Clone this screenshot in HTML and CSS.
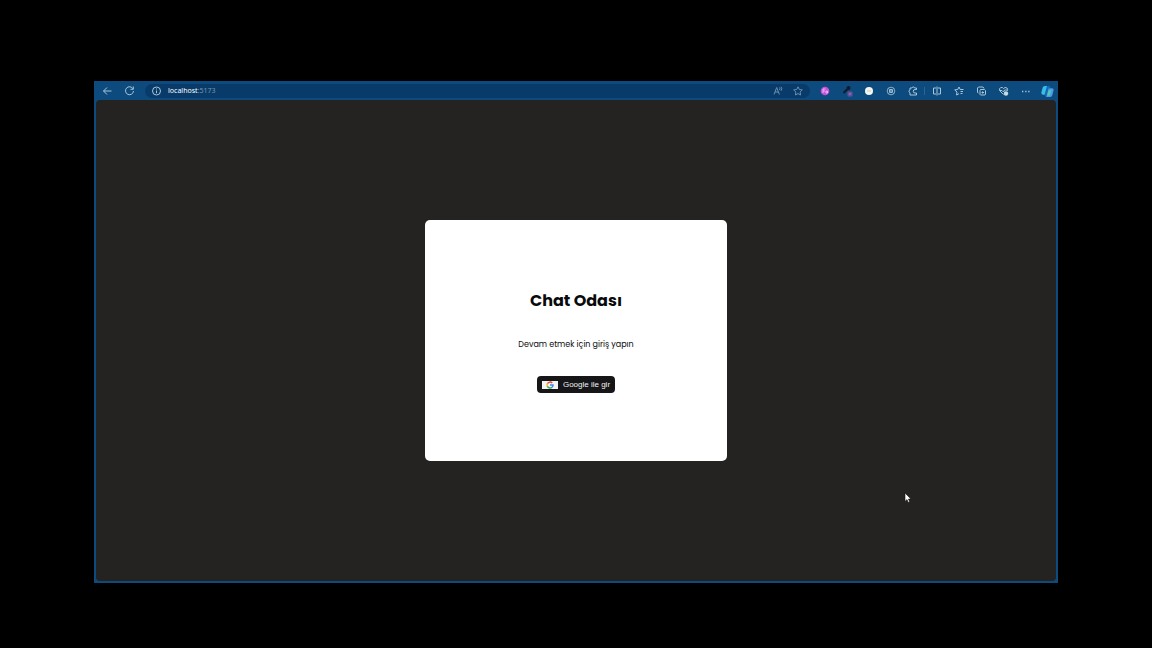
FILE: index.html
```html
<!DOCTYPE html>
<html lang="tr">
<head>
<meta charset="utf-8">
<meta name="viewport" content="width=device-width, initial-scale=1">
<title>Chat Odası</title>
<link rel="stylesheet" href="styles.css">
</head>
<body>
<div class="browser">
  <header class="toolbar">
    <button class="tool" aria-label="Geri"><svg class="icon" viewBox="0 0 12 12"><path d="M10.500 6H2.500M6 2.500 2.500 6 6 9.500"/></svg></button>
    <button class="tool" aria-label="Yenile"><svg class="icon" viewBox="0 0 12 12"><path d="M10 3.800A4 4 0 1 0 10.500 6M10.300 1.500v2.800H7.500"/></svg></button>
    <div class="address">
      <button class="tool" aria-label="Site bilgisi"><svg class="icon" viewBox="0 0 12 12"><circle cx="6.500" cy="6" r="4"/><path d="M6.500 5.500v2.700M6.500 3.500v1"/></svg></button>
      <div class="url" role="textbox" contenteditable="true" spellcheck="false" aria-label="Adres"><span class="host">localhost</span><span class="port">:5173</span></div>
      <button class="tool tool-dim" aria-label="Sesli oku"><svg class="icon" viewBox="0 0 12 12"><path d="M2 9.500 4.700 2.500 7.400 9.500M3 7h3.500M7.500 2.500q1 1 0 2.500M9 1.800q1.600 1.700 0 4"/></svg></button>
      <button class="tool tool-dim" aria-label="Sık kullanılanlara ekle"><svg class="icon" viewBox="0 0 12 12"><path d="m6 1.800 1.300 2.700 3 .4-2.200 2.100.5 3L6 8.600 3.400 10l.5-3-2.200-2.100 3-.4z"/></svg></button>
    </div>
    <button class="tool" aria-label="Uzantı"><svg class="icon" viewBox="0 0 12 12"><circle cx="6" cy="6" r="4.300" fill="#c850d8" stroke="none"/><path d="M4 8V4h2.500M4 6h2M7 8V6h1.500v2z" stroke="#f7d9fb" stroke-width=".7"/></svg></button>
    <button class="tool" aria-label="Renk seçici"><svg class="icon" viewBox="0 0 12 12"><path d="m2.500 8 4-4" stroke="#101b2c" stroke-width="2"/><circle cx="7.500" cy="3" r="2" fill="#101b2c" stroke="none"/><rect x="6.500" y="6.500" width="5" height="5" rx="1" fill="#65519b" stroke="none"/><path d="M8 9h2" stroke="#b57bae"/></svg></button>
    <button class="tool" aria-label="Uzantı 2"><svg class="icon" viewBox="0 0 12 12"><circle cx="6" cy="6" r="4" fill="#f5f5ef" stroke="none"/><path d="M5 5v2M7 5v2" stroke="#c5cbc9"/></svg></button>
    <button class="tool" aria-label="Uzantı 3"><svg class="icon" viewBox="0 0 12 12"><circle cx="6" cy="6" r="3.800" stroke-width=".8"/><circle cx="6" cy="6" r="1.600"/><path d="m3.500 3.500 5 5M8.500 3.500l-5 5" stroke-width=".5"/></svg></button>
    <button class="tool" aria-label="Uzantılar"><svg class="icon" viewBox="0 0 12 12"><path d="M9.500 4.500V3H7.600a1.400 1.400 0 0 0-2.700 0H3v2a1.400 1.400 0 0 0 0 2.700V10h6.500V8H8a1.500 1.500 0 0 1 0-3.500z"/></svg></button>
    <span class="divider"></span>
    <button class="tool" aria-label="Ekranı böl"><svg class="icon" viewBox="0 0 12 12"><path d="M5 3H2.500v6H5M7 3h2.500v6H7M6 1.500v9"/></svg></button>
    <button class="tool" aria-label="Sık kullanılanlar"><svg class="icon" viewBox="0 0 12 12"><path d="M7.200 4.500 6 2 4.700 4.500l-3 .4L4 7l-.5 3L6 8.700M7.200 4.500H10.500M7.500 6.500H10M7.500 8.500H9.500"/></svg></button>
    <button class="tool" aria-label="Koleksiyonlar"><svg class="icon" viewBox="0 0 12 12"><path d="M3.500 8 2.500 7.500V3l1-1H8l1 1.500M5 5.500V5l.5-.5h4l1 1v4l-.5.500H5.500L5 9.500zM6.500 7.500h2.500M7.700 6.300v2.400"/></svg></button>
    <button class="tool" aria-label="Performans"><svg class="icon" viewBox="0 0 12 12"><path d="M6.500 9.500 3 6Q1.500 3.500 3.800 2.500 5.500 2 6.500 3.500 8 1.700 10 3q1.200 1.300 0 3M2.500 5.500H5L6.500 7l1-2h3"/><circle cx="9" cy="8.500" r="2.200" fill="#c7dbe3" stroke="none"/></svg></button>
    <button class="tool" aria-label="Diğer"><svg class="icon" viewBox="0 0 12 12"><path d="M3 6.500h1.300M6.200 6.500h1.300M9.200 6.500h1.300" stroke-width="1.300"/></svg></button>
    <button class="tool" aria-label="Copilot"><svg class="icon icon-large" viewBox="0 0 12 12"><path d="M3.500 1h4L5.300 9H2Q0 9 .4 6.800L1.500 2.500Q2 1 3.500 1z" fill="#38bde5" stroke="none"/><path d="M6.500 3H10q2 0 1.500 2.300l-1 4Q10 11 8.500 11h-4z" fill="#4d9be6" stroke="none"/><path d="M5.500 1h2q1 0 1.300 2H7L5 10.500Q3.500 11 3.300 9z" fill="#1468b4" stroke="none"/><path d="m7 5 2.500-.5L8 10H5.700z" fill="#55c9b2" stroke="none"/></svg></button>
  </header>
  <main class="page">
    <section class="card">
      <h1 class="title">Chat Odası</h1>
      <p class="hint">Devam etmek için giriş yapın</p>
      <button class="login">
        <svg class="google" viewBox="0 0 16 8"><rect width="16" height="8" fill="#f3f3f3"/><g fill="none" stroke-width="1.500"><path d="M5.400 2.700A3 3 0 0 1 10.200 2" stroke="#e94435"/><path d="M5.400 2.700a3 3 0 0 0 0 2.700" stroke="#f9bb15"/><path d="M5.400 5.400a3 3 0 0 0 4.700.8" stroke="#34a853"/><path d="M8 4h3a3 3 0 0 1-.9 2.200" stroke="#4285f4"/></g></svg>
        <span>Google ile gir</span>
      </button>
    </section>
  </main>
</div>
<svg class="pointer" viewBox="0 0 8 12" aria-hidden="true"><path d="M1 1v8.500l2-1.900 1.200 2.800 1.500-.7-1.200-2.600H7z" fill="#fff" stroke="#111" stroke-width=".6"/></svg>
</body>
</html>
```
FILE: styles.css
```css
* {
  box-sizing: border-box;
}

body {
  margin: 0;
  min-height: 100vh;
  padding: 81px 94px 65px;
  display: flex;
  background: #000;
  font-family: Poppins, Inter, sans-serif;
}

button {
  margin: 0;
  border: 0;
  font: inherit;
  cursor: pointer;
}

.browser {
  flex: 1;
  display: flex;
  flex-direction: column;
  padding: 1px 2px 2px;
  background: #0d4b7e;
}

.toolbar {
  display: flex;
  align-items: center;
  height: 18px;
  margin-right: -2px;
}

.tool {
  flex: none;
  display: flex;
  align-items: center;
  justify-content: center;
  width: 22px;
  height: 18px;
  padding: 0;
  background: none;
  color: #a9c6d8;
}

.tool-dim {
  width: 20px;
  color: #6790b0;
}

.icon {
  width: 12px;
  height: 12px;
  fill: none;
  stroke: currentColor;
  stroke-width: 1;
}

.icon-large {
  width: 13px;
  height: 13px;
}

.address {
  flex: 1;
  display: flex;
  align-items: center;
  height: 14px;
  margin: 0 4px 0 5px;
  padding-right: 2px;
  border-radius: 7px;
  background: #083b69;
}

.url {
  flex: 1;
  padding-left: 1px;
  font: 7px/14px "Noto Sans", "Open Sans", sans-serif;
  white-space: nowrap;
  outline: 0;
}

.host {
  color: #fff;
}

.port {
  color: #7896ae;
}

.divider {
  flex: none;
  width: 1px;
  height: 8px;
  margin-right: 1px;
  background: #2c6591;
}

.page {
  flex: 1;
  display: grid;
  place-items: center;
  border-radius: 4px;
  background: #242322;
}

.card {
  display: flex;
  flex-direction: column;
  align-items: center;
  gap: 25px;
  padding: 68px 93px;
  border-radius: 5px;
  background: #fff;
  color: #0a0a0c;
}

.title {
  margin: 0;
  font-size: 16px;
  line-height: 26px;
  font-weight: 700;
}

.hint {
  margin: 0;
  font-size: 8px;
  line-height: 12px;
}

.login {
  display: flex;
  align-items: center;
  gap: 5px;
  padding: 3px 5px;
  border-radius: 4px;
  background: #161618;
  color: #f1f1f1;
  font: 8px/11px "Liberation Sans", Arial, sans-serif;
}

.google {
  width: 16px;
  height: 8px;
}

.pointer {
  position: absolute;
  left: 904px;
  top: 492px;
  width: 8px;
  height: 12px;
}
```
